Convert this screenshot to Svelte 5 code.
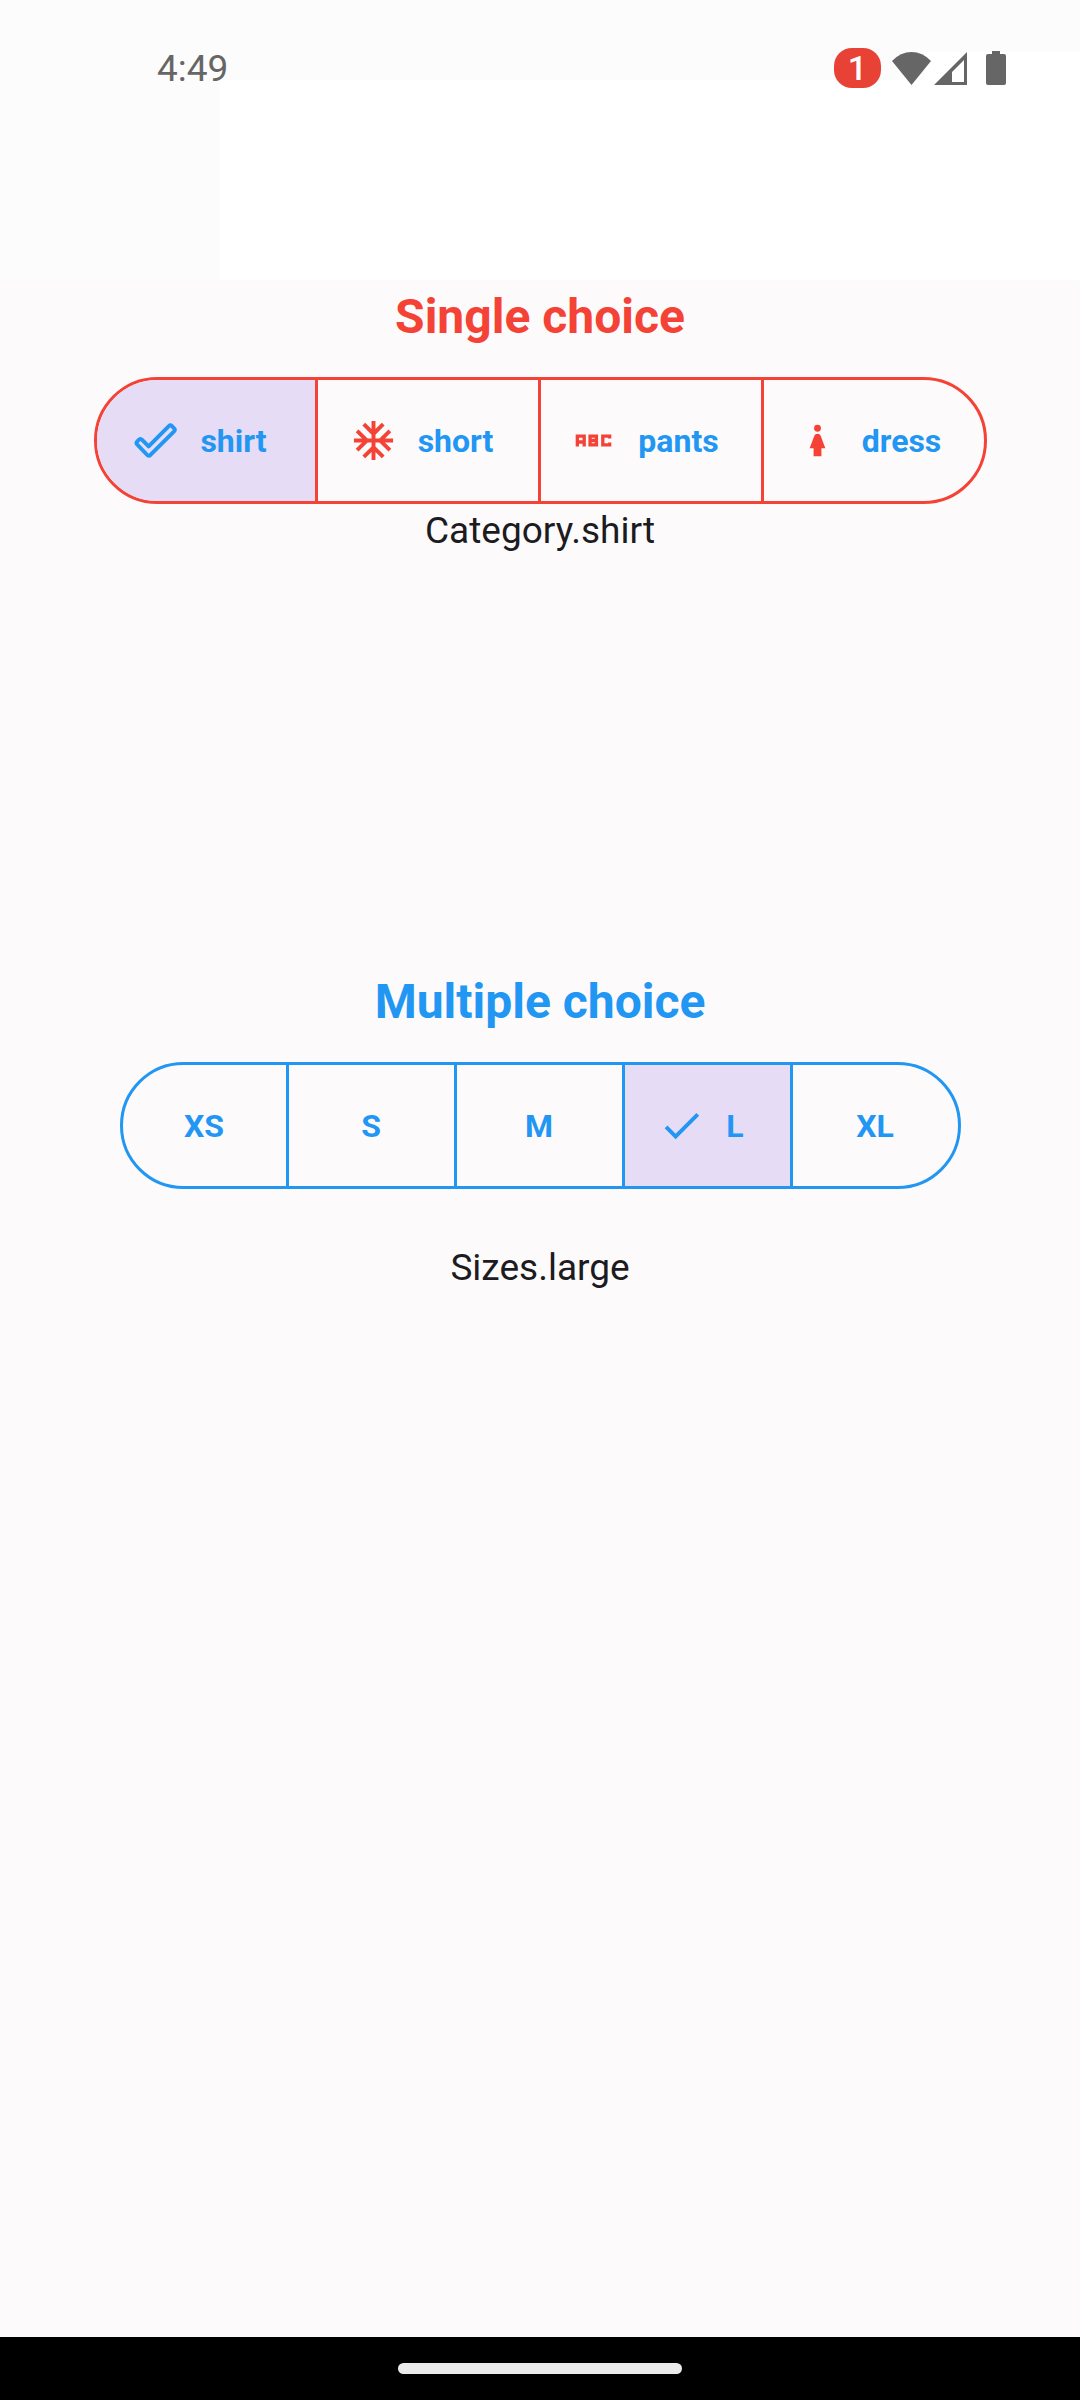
<script lang="ts">
  type Option = { value: string; icon?: string };

  const categories: Option[] = [
    { value: 'shirt', icon: 'done' },
    { value: 'short', icon: 'snow' },
    { value: 'pants', icon: 'abc' },
    { value: 'dress', icon: 'girl' }
  ];
  const sizes = [
    { label: 'XS', name: 'extraSmall' },
    { label: 'S', name: 'small' },
    { label: 'M', name: 'medium' },
    { label: 'L', name: 'large' },
    { label: 'XL', name: 'extraLarge' }
  ];

  let category = $state('shirt');
  let picked = $state(['large']);

  function toggle(name: string) {
    picked = picked.includes(name) ? picked.filter((n) => n !== name) : [...picked, name];
  }
</script>

{#snippet icon(name: string)}
  <svg class="icon" viewBox="0 0 24 24" aria-hidden="true">
    {#if name === 'done'}
      <path class="line blue" d="M2.7 14.1Q1.9 13.3 2.7 12.5L3.6 11.6Q4.4 10.9 5.2 11.7L8.5 15L18.8 4.7Q19.6 3.9 20.4 4.7L21.5 5.8Q22.2 6.5 21.5 7.3L9.3 19.5Q8.5 20.2 7.8 19.4Z" />
    {:else if name === 'snow'}
      <path class="red" d="M22 11h-4.17l3.24-3.24-1.41-1.42L15 11h-2V9l4.66-4.66-1.42-1.41L13 6.17V2h-2v4.17L7.76 2.93 6.34 4.34 11 9v2H9L4.34 6.34 2.93 7.76 6.17 11H2v2h4.17l-3.24 3.24 1.41 1.42L9 13h2v2l-4.66 4.66 1.42 1.41L11 17.83V22h2v-4.17l3.24 3.24 1.42-1.41L13 15v-2h2l4.66 4.66 1.41-1.42L17.83 13H22z" />
    {:else if name === 'abc'}
      <path class="line thin" d="M3.75 15V9.75H7.25V15M3.75 12.75H7.25M10.25 9.75H13.5V11.5L13 12L13.5 12.5V14.25H10.25ZM10.25 12H13M20.25 11V9.75H16.75V14.25H20.25V13" />
    {:else if name === 'girl'}
      <circle class="red" cx="12" cy="5.75" r="1.75" />
      <path class="red" d="M14 16v4h-4v-4H8l2.38-6.38c.26-.68.9-1.12 1.62-1.12s1.36.44 1.62 1.12L16 16h-2z" />
    {:else}
      <path class="blue" d="M9 16.17L4.83 12l-1.42 1.41L9 19 21 7l-1.41-1.41z" />
    {/if}
  </svg>
{/snippet}

<div class="screen">
  <header>
    <div class="status">
      <time>4:49</time>
      <div class="indicators">
        <span class="badge">1</span>
        <svg class="wifi" viewBox="0 0 39 33" aria-hidden="true">
          <path d="M0 9Q8.500 0 19.500 0T39 9L19.500 33Z" />
        </svg>
        <svg class="signal" viewBox="0 0 33 33" aria-hidden="true">
          <path fill-rule="evenodd" d="M33 0V33H0ZM30 8L18 20V30H30Z" />
        </svg>
        <svg class="battery" viewBox="0 0 20 34" aria-hidden="true">
          <path d="M6 0H14V3H18Q20 3 20 5V32Q20 34 18 34H2Q0 34 0 32V5Q0 3 2 3H6Z" />
        </svg>
      </div>
    </div>
  </header>

  <main>
    <section class="single">
      <h2>Single choice</h2>
      <div class="segments" role="group" aria-label="Single choice">
        {#each categories as option}
          <button
            type="button"
            class:selected={category === option.value}
            class="with-icon"
            aria-pressed={category === option.value}
            onclick={() => (category = option.value)}
          >
            {@render icon(option.icon ?? 'check')}
            <span>{option.value}</span>
          </button>
        {/each}
      </div>
      <p>Category.{category}</p>
    </section>

    <section class="multiple">
      <h2>Multiple choice</h2>
      <div class="segments" role="group" aria-label="Multiple choice">
        {#each sizes as size}
          <button
            type="button"
            class:selected={picked.includes(size.name)}
            class:with-icon={picked.includes(size.name)}
            aria-pressed={picked.includes(size.name)}
            onclick={() => toggle(size.name)}
          >
            {#if picked.includes(size.name)}
              {@render icon('check')}
            {/if}
            <span>{size.label}</span>
          </button>
        {/each}
      </div>
      <p>{picked.map((n) => `Sizes.${n}`).join(', ')}</p>
    </section>
  </main>

  <footer><div class="handle"></div></footer>
</div>

<style>
  :global(body) {
    margin: 0;
    background: #fcfafb;
  }

  .screen {
    --red: #f44336;
    --blue: #2196f3;
    display: flex;
    flex-direction: column;
    min-height: 100vh;
    font-family: Roboto, 'Liberation Sans', sans-serif;
    color: #1c1b1f;
  }

  header {
    box-sizing: border-box;
    height: 280px;
    background:
      linear-gradient(#fcfcfc, #fcfcfc) 0 0 / 100% 52px no-repeat,
      linear-gradient(#fcfcfc, #fcfcfc) 0 0 / 925px 80px no-repeat,
      linear-gradient(#fcfcfc, #fcfcfc) 0 0 / 220px 100% no-repeat,
      #fff;
  }

  .status {
    display: flex;
    align-items: center;
    justify-content: space-between;
    padding: 48px 74px 0 157px;
    height: 40px;
    color: #666;
  }

  time {
    padding-top: 2px;
    font-size: 37px;
    line-height: 40px;
  }

  .indicators {
    display: flex;
    align-items: center;
  }

  .indicators svg {
    display: block;
    fill: #666;
  }

  .badge {
    width: 47px;
    border-radius: 18px;
    background: #e84135;
    color: #fff;
    font-size: 34px;
    font-weight: 500;
    line-height: 40px;
    text-align: center;
  }

  .wifi {
    width: 39px;
    height: 33px;
    margin-left: 11px;
  }

  .signal {
    width: 33px;
    height: 33px;
    margin-left: 3px;
  }

  .battery {
    width: 20px;
    height: 34px;
    margin-left: 19px;
  }

  main {
    flex: 1;
    padding-top: 9px;
  }

  section {
    display: flex;
    flex-direction: column;
    align-items: center;
  }

  h2 {
    margin: 0 0 32px;
    font-size: 48px;
    font-weight: 700;
    line-height: 56px;
  }

  p {
    margin: 0;
    font-size: 37px;
    line-height: 50px;
  }

  .segments {
    box-sizing: border-box;
    display: flex;
    height: 127px;
    border: 3px solid var(--edge);
    border-radius: 64px;
    overflow: hidden;
  }

  .single {
    --edge: var(--red);
    --segment: 223px;
  }

  .multiple {
    --edge: var(--blue);
    --segment: 168px;
    padding-top: 418px;
  }

  .single h2 {
    color: var(--red);
  }

  .multiple h2 {
    color: var(--blue);
  }

  .single p {
    margin-top: 2px;
  }

  .multiple p {
    margin-top: 54px;
  }

  button {
    box-sizing: border-box;
    display: flex;
    align-items: center;
    justify-content: center;
    gap: 21px;
    width: var(--segment);
    padding: 0;
    border: 0;
    background: transparent;
    color: var(--blue);
    font: 700 32px/36px Roboto, 'Liberation Sans', sans-serif;
    cursor: pointer;
  }

  button:first-child {
    width: calc(var(--segment) - 5px);
  }

  button:last-child {
    width: var(--segment);
  }

  button + button {
    border-left: 3px solid var(--edge);
  }

  .with-icon {
    padding-right: 12px;
  }

  .selected {
    background: #e6dcf5;
  }

  .icon {
    flex: none;
    width: 47px;
    height: 47px;
  }

  .red {
    fill: var(--red);
  }

  .blue {
    fill: var(--blue);
  }

  .line {
    fill: none;
    stroke: var(--blue);
    stroke-width: 2;
    stroke-linejoin: round;
  }

  .thin {
    stroke: var(--red);
    stroke-width: 1.7;
    stroke-linejoin: miter;
  }

  footer {
    display: flex;
    align-items: center;
    justify-content: center;
    height: 63px;
    background: #000;
  }

  .handle {
    width: 284px;
    height: 11px;
    border-radius: 6px;
    background: #ebebeb;
  }
</style>
